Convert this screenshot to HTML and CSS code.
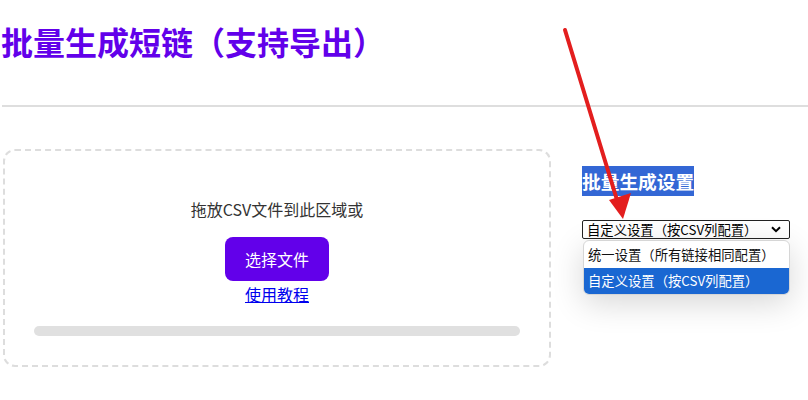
FILE: index.html
```html
<!DOCTYPE html>
<html lang="zh-CN">
<head>
<meta charset="utf-8">
<title>批量生成短链（支持导出）</title>
<link rel="stylesheet" href="styles.css">
</head>
<body>
<div class="page">
  <header class="header">
    <h1 class="title">批量生成短链（支持导出）</h1>
  </header>
  <main class="main">
    <section class="dropbox">
      <p class="drop-text">拖放CSV文件到此区域或</p>
      <button class="btn" type="button">选择文件</button>
      <a class="tutorial" href="#">使用教程</a>
      <div class="progress"></div>
    </section>
    <aside class="settings">
      <h3 class="settings-title"><span class="hl">批量生成设置</span></h3>
      <div class="select-wrap">
        <select class="select">
          <option>统一设置（所有链接相同配置）</option>
          <option selected>自定义设置（按CSV列配置）</option>
        </select>
        <svg class="chevron" width="10" height="7" viewBox="0 0 10 7"><polyline points="1,1.2 5,5.2 9,1.2" fill="none" stroke="#000" stroke-width="2"/></svg>
        <ul class="menu">
          <li class="menu-item first">统一设置（所有链接相同配置）</li>
          <li class="menu-item active">自定义设置（按CSV列配置）</li>
        </ul>
      </div>
    </aside>
  </main>
  <svg class="arrow" width="808" height="400" viewBox="0 0 808 400">
    <line x1="565" y1="30" x2="617" y2="200" stroke="#e31e1e" stroke-width="4" stroke-linecap="round"/>
    <polygon points="609,200 631,193 623,219" fill="#e31e1e"/>
  </svg>
</div>
</body>
</html>
```
FILE: styles.css
```css
html, body {
  margin: 0;
  padding: 0;
  background: #fff;
}
body {
  font-family: "Noto Sans CJK SC", "Noto Sans", sans-serif;
  color: #000;
}
.page {
  position: relative;
  width: 808px;
  height: 400px;
  overflow: hidden;
  padding-left: 2px;
  box-sizing: border-box;
}
.header {
  padding-top: 18px;
  padding-bottom: 41px;
  border-bottom: 2px solid #dedede;
}
.title {
  margin: 0 0 0 -1px;
  font-size: 32px;
  line-height: 46px;
  font-weight: 700;
  color: #6200ea;
}
.main {
  display: grid;
  grid-template-columns: 548px 1fr;
  column-gap: 31px;
  margin-top: 42px;
  margin-left: 1px;
}
.dropbox {
  box-sizing: border-box;
  height: 218px;
  border: 2px dashed #dddddd;
  border-radius: 12px;
  padding: 46px 29px 29px;
  display: flex;
  flex-direction: column;
  align-items: center;
}
.drop-text {
  margin: 0;
  font-size: 16px;
  line-height: 24px;
  color: #333;
}
.btn {
  margin-top: 16px;
  height: 44px;
  padding: 0 20px;
  border: none;
  border-radius: 8px;
  background: #6200ea;
  color: #fff;
  font-family: inherit;
  font-size: 16px;
  line-height: 24px;
}
.tutorial {
  margin-top: 1px;
  font-size: 16px;
  line-height: 24px;
  color: #0000ee;
  text-decoration: underline;
}
.progress {
  margin-top: 20px;
  width: 100%;
  height: 10px;
  border-radius: 5px;
  background: #e0e0e0;
}
.settings {
  display: flex;
  flex-direction: column;
  align-items: flex-start;
}
.settings-title {
  margin: 17px 0 0;
  font-size: 18.72px;
  font-weight: 700;
  line-height: 30px;
  height: 30px;
}
.hl {
  display: inline-block;
  background: #3367d5;
  color: #fff;
  line-height: 30px;
}
.select-wrap {
  position: relative;
  margin-top: 24px;
  width: 208px;
}
.select {
  display: block;
  width: 208px;
  height: 19px;
  box-sizing: border-box;
  appearance: none;
  -webkit-appearance: none;
  border: 1px solid #222;
  border-radius: 2px;
  background: #fff;
  padding: 0 0 0 4px;
  font-family: inherit;
  font-size: 13.33px;
  line-height: 17px;
  color: #000;
}
.chevron {
  position: absolute;
  right: 9px;
  top: 6px;
}
.menu {
  position: absolute;
  left: 1px;
  top: 20px;
  width: 207px;
  margin: 0;
  padding: 0;
  list-style: none;
  background: #fff;
  border: 1px solid #d6d6d6;
  border-radius: 6px;
  overflow: hidden;
  box-sizing: border-box;
  box-shadow: 0 8px 32px rgba(0, 0, 0, 0.16);
}
.menu-item {
  height: 26px;
  line-height: 26px;
  padding-left: 4px;
  font-size: 13.33px;
  color: #111;
  white-space: nowrap;
}
.menu-item.first {
  height: 27px;
  line-height: 27px;
}
.menu-item.active {
  background: #1a67d2;
  color: #fff;
}
.arrow {
  position: absolute;
  left: 0;
  top: 0;
  pointer-events: none;
}
```
